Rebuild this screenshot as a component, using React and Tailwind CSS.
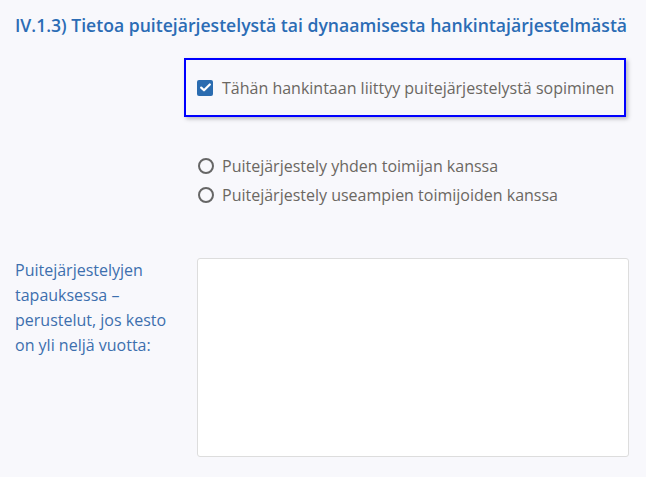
import React from 'react'

export default function App() {
  return (
    <div className="w-[646px] h-[477px] bg-[#f8f8fc] overflow-hidden" style={{ fontFamily: '"Open Sans", "Noto Sans", sans-serif' }}>
      <div className="pl-[15px] pt-[12px]">
        <h2 className="text-[17.6px] leading-[26px] font-semibold text-[#2b6cb5]">
          IV.1.3) Tietoa puitejärjestelystä tai dynaamisesta hankintajärjestelmästä
        </h2>
      </div>

      <div className="pl-[184px] pt-[20px]">
        <div className="w-[442px] h-[59px] border-2 border-[#0000ff] shadow-[2px_2px_4px_rgba(0,0,0,0.25)] flex items-center pl-[11px]">
          <label className="flex items-center gap-[9px] text-[16px] text-[#6b6762]">
            <span className="w-[16px] h-[16px] rounded-[2px] bg-[#2b6cb0] flex items-center justify-center">
              <svg width="11" height="9" viewBox="0 0 11 9" fill="none">
                <path d="M1.2 4.6 L4 7.3 L9.8 1.5" stroke="white" strokeWidth="2.2" strokeLinecap="round" strokeLinejoin="round" />
              </svg>
            </span>
            Tähän hankintaan liittyy puitejärjestelystä sopiminen
          </label>
        </div>
      </div>

      <div className="pl-[198px] pt-[37px] flex flex-col gap-[5px] text-[16px] leading-[24px] text-[#6b6762]">
        <label className="flex items-center gap-[8px]">
          <span className="w-[16px] h-[16px] rounded-full border-2 border-[#666]" />
          Puitejärjestely yhden toimijan kanssa
        </label>
        <label className="flex items-center gap-[8px]">
          <span className="w-[16px] h-[16px] rounded-full border-2 border-[#666]" />
          Puitejärjestely useampien toimijoiden kanssa
        </label>
      </div>

      <div className="flex pl-[15px] pt-[51px]">
        <div className="w-[182px] pr-[20px] text-[16px] leading-[25px] text-[#3d6fae]">
          Puitejärjestelyjen tapauksessa – perustelut, jos kesto on yli neljä vuotta:
        </div>
        <textarea className="w-[432px] h-[199px] bg-white border border-[#dddddd] rounded-[3px] resize-none" />
      </div>
    </div>
  )
}
